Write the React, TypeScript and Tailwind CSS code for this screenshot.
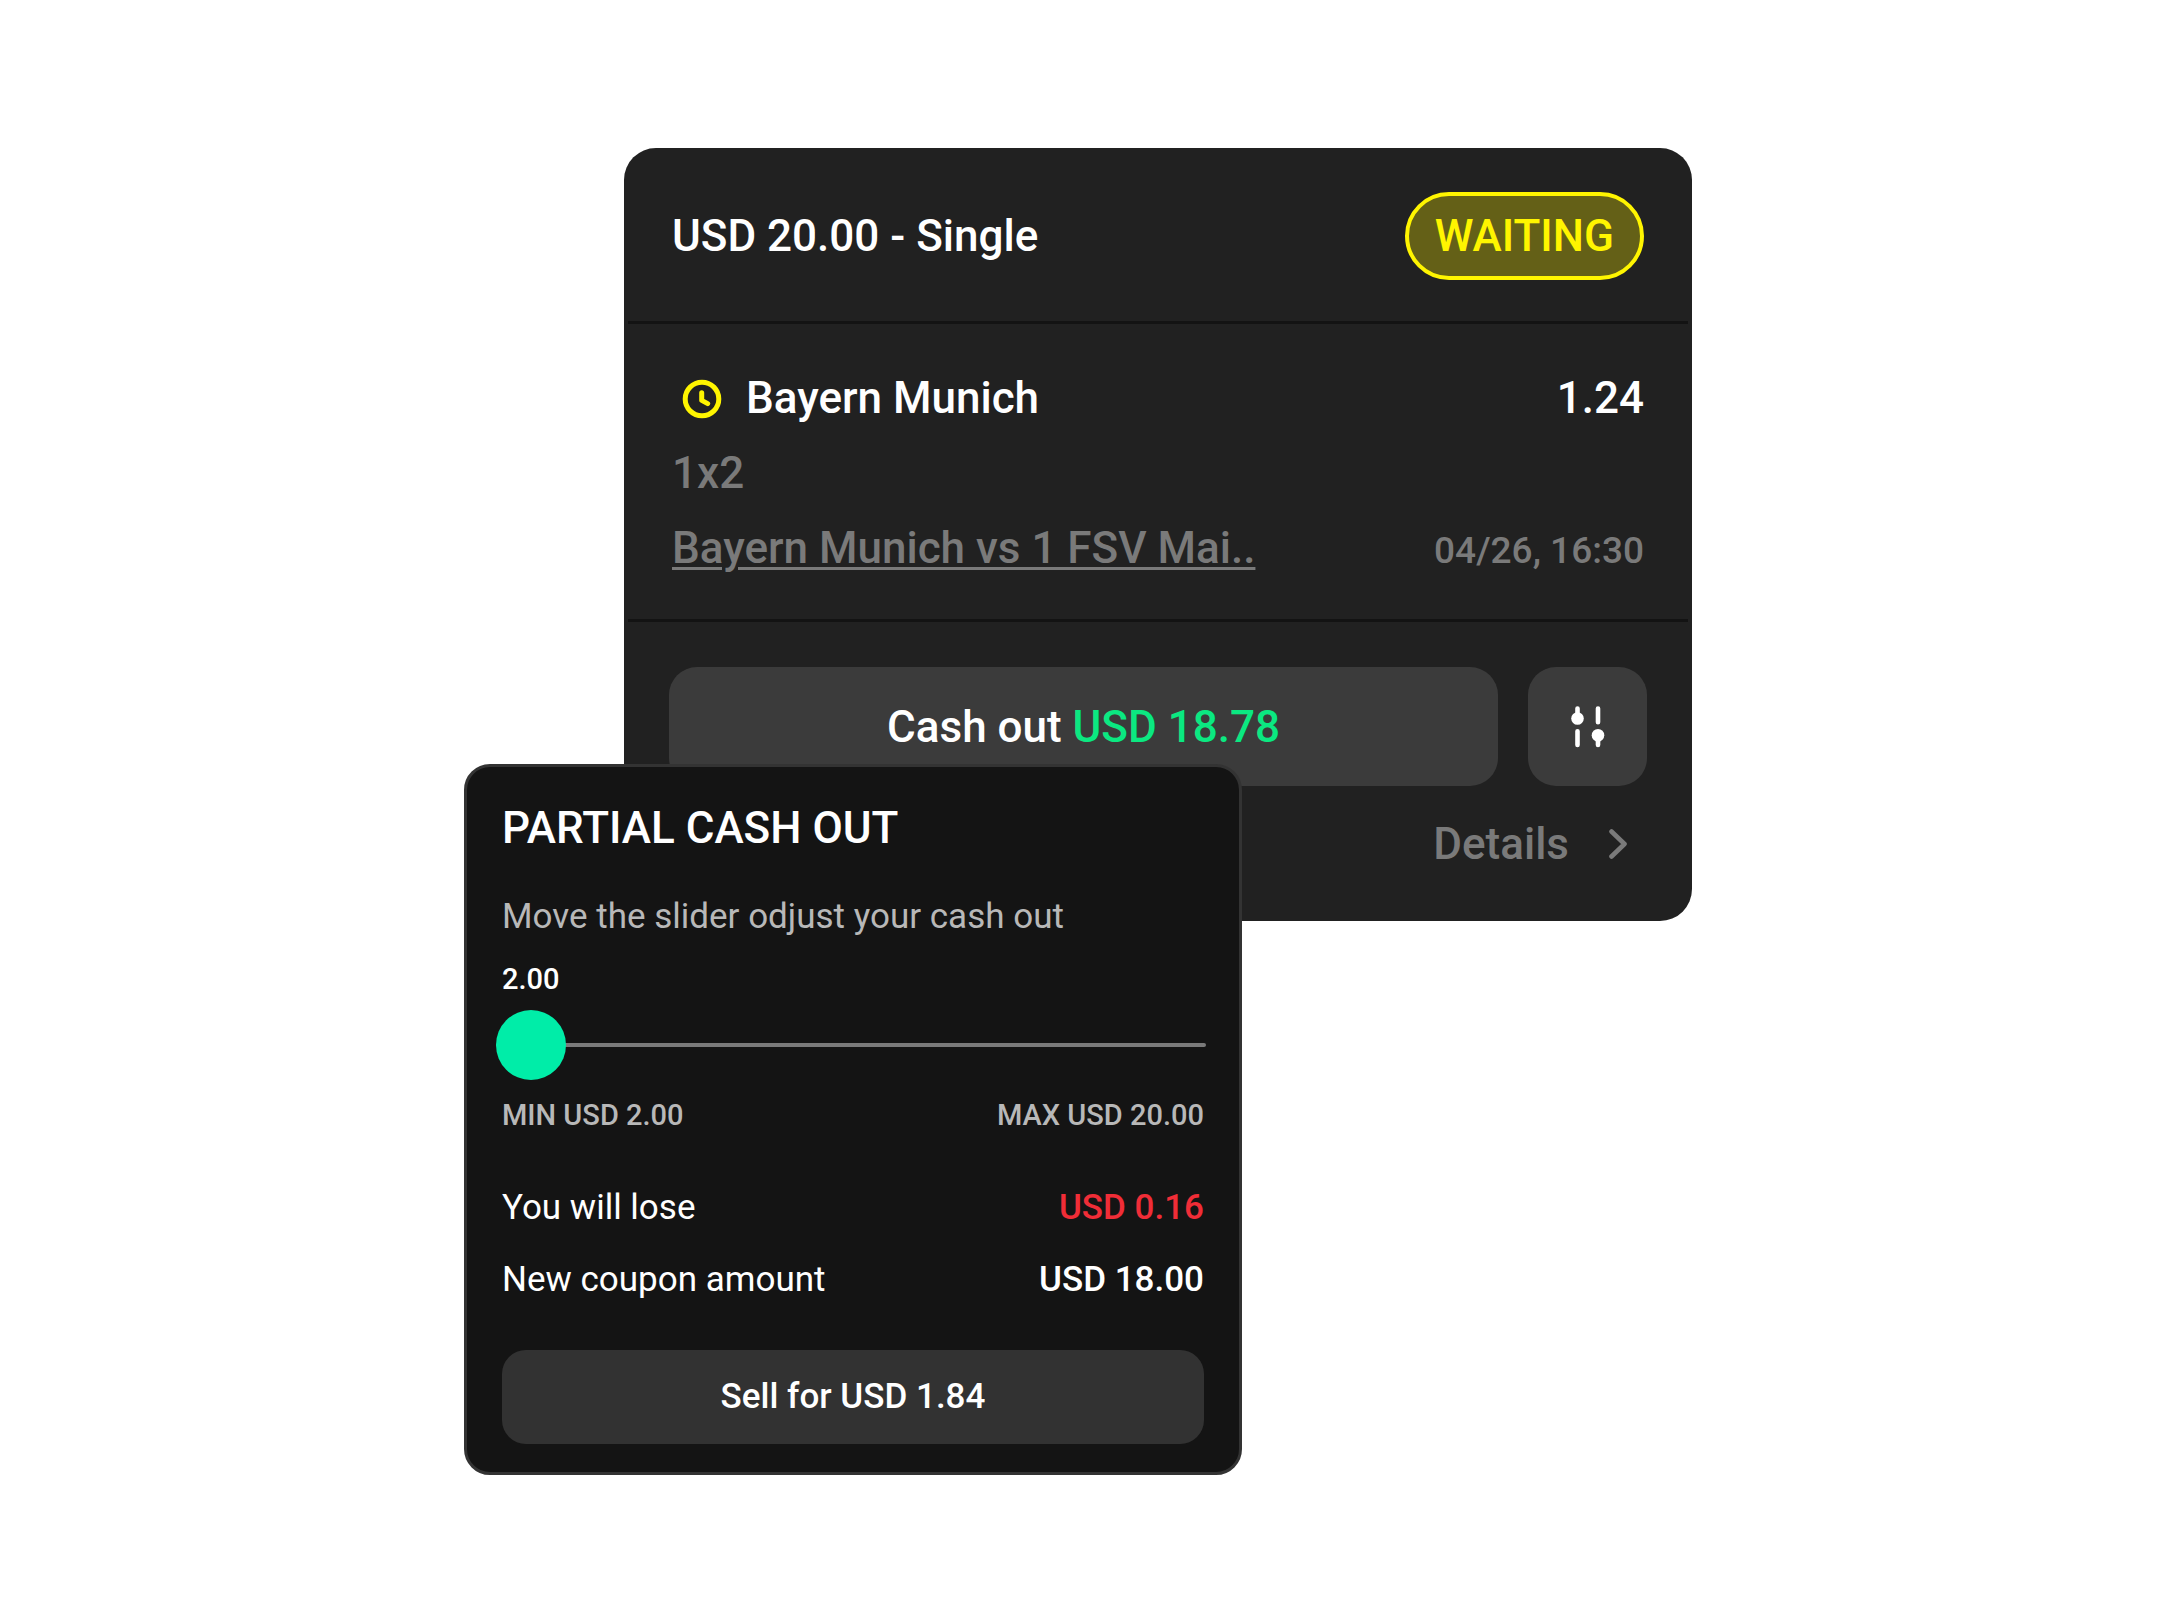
import { useState } from "react";

function ClockIcon() {
  return (
    <svg viewBox="0 0 40 40" className="size-10" fill="none" stroke="#fff500" strokeWidth="5" strokeLinecap="round" strokeLinejoin="round" aria-hidden="true">
      <circle cx="20" cy="20" r="16.8" />
      <path d="M19.7 13.8v7.6l6 3.2" />
    </svg>
  );
}

function TuneIcon() {
  return (
    <svg viewBox="0 0 34 42" className="h-[42px] w-[34px]" fill="white" stroke="white" strokeWidth="4.6" strokeLinecap="round" aria-hidden="true">
      <path d="M6.5 2.5v10M6.5 25.2v13.8M27 2.5v13.8M27 29v10" />
      <circle cx="6.5" cy="12.5" r="6.3" stroke="none" />
      <circle cx="27" cy="29.3" r="6.3" stroke="none" />
    </svg>
  );
}

function ChevronIcon() {
  return (
    <svg viewBox="0 0 18 30" className="h-[30px] w-[18px]" fill="none" stroke="#7a7a7a" strokeWidth="4.6" strokeLinecap="round" strokeLinejoin="round" aria-hidden="true">
      <path d="M2.5 2.5l13 12.5-13 12.5" />
    </svg>
  );
}

function BetCard() {
  return (
    <section className="ml-auto w-full max-w-[1068px] rounded-[32px] bg-[#212121] text-[44px] font-medium text-white">
      <header className="flex items-center justify-between px-12 pt-11 pb-[41px]">
        <h1>USD 20.00 - Single</h1>
        <span className="rounded-full border-4 border-[#fff500] bg-[#646017] px-[26px] leading-[80px] text-[#fff500]">
          WAITING
        </span>
      </header>

      <div className="mx-1 border-y-3 border-[#131313] px-11 pt-[37px] pb-[33px] leading-[75px]">
        <div className="flex items-center justify-between">
          <div className="flex items-center gap-6 pl-[10px]">
            <ClockIcon />
            <span>Bayern Munich</span>
          </div>
          <span>1.24</span>
        </div>
        <p className="text-[#7a7a7a]">1x2</p>
        <div className="flex items-baseline justify-between text-[#7a7a7a]">
          <a href="#match" className="underline decoration-3 underline-offset-4">
            Bayern Munich vs 1 FSV Mai..
          </a>
          <time className="text-[37px] leading-none">04/26, 16:30</time>
        </div>
      </div>

      <footer className="px-[45px] pt-[45px] pb-[47px]">
        <div className="flex gap-[30px]">
          <button type="button" className="h-[119px] flex-1 rounded-[28px] bg-[#3b3b3b]">
            Cash out <span className="text-[#0be881]">USD 18.78</span>
          </button>
          <button
            type="button"
            aria-label="Adjust cash out"
            className="flex size-[119px] items-center justify-center rounded-[28px] bg-[#3b3b3b]"
          >
            <TuneIcon />
          </button>
        </div>
        <a href="#details" className="mt-7 ml-auto flex w-fit items-center gap-10 pr-5 leading-[60px] text-[#7a7a7a]">
          Details
          <ChevronIcon />
        </a>
      </footer>
    </section>
  );
}

function PartialCashOut() {
  const [amount, setAmount] = useState(2);

  return (
    <section className="relative -mt-[157px] w-full max-w-[778px] rounded-[26px] border-3 border-[#333333] bg-[#141414] px-[35px] pt-[35px] pb-7 text-[35px] leading-[44px] text-white">
      <h2 className="text-[44px] leading-[52px] font-medium">PARTIAL CASH OUT</h2>
      <label htmlFor="amount" className="mt-[41px] block text-[#b8b8b8]">
        Move the slider odjust your cash out
      </label>

      <div className="mt-[22px] text-[29px] leading-[36px] font-medium">
        <output htmlFor="amount" className="block">{amount.toFixed(2)}</output>
        <input
          id="amount"
          type="range"
          min={2}
          max={20}
          step={0.01}
          value={amount}
          onChange={(e) => setAmount(Number(e.target.value))}
          className="mt-[13px] -ml-1.5 block h-[70px] w-[calc(100%+8px)] appearance-none bg-transparent [&::-webkit-slider-runnable-track]:h-1 [&::-webkit-slider-runnable-track]:rounded-full [&::-webkit-slider-runnable-track]:bg-[#7a7a7a] [&::-webkit-slider-thumb]:-mt-[33px] [&::-webkit-slider-thumb]:size-[70px] [&::-webkit-slider-thumb]:appearance-none [&::-webkit-slider-thumb]:rounded-full [&::-webkit-slider-thumb]:bg-[#00eda8]"
        />
        <div className="mt-[17px] flex justify-between text-[#b8b8b8]">
          <span>MIN USD 2.00</span>
          <span>MAX USD 20.00</span>
        </div>
      </div>

      <dl className="mt-[53px] flex flex-col gap-7">
        <div className="flex justify-between">
          <dt>You will lose</dt>
          <dd className="font-medium text-[#f02d37]">USD 0.16</dd>
        </div>
        <div className="flex justify-between">
          <dt>New coupon amount</dt>
          <dd className="font-medium">USD 18.00</dd>
        </div>
      </dl>

      <button type="button" className="mt-12 h-[94px] w-full rounded-[24px] bg-[#323232] font-medium">
        Sell for USD 1.84
      </button>
    </section>
  );
}

export default function App() {
  return (
    <main className="min-h-screen bg-white pt-[148px] pr-1 pb-36 font-['Roboto',sans-serif]">
      <div className="mx-auto max-w-[1228px]">
        <BetCard />
        <PartialCashOut />
      </div>
    </main>
  );
}
